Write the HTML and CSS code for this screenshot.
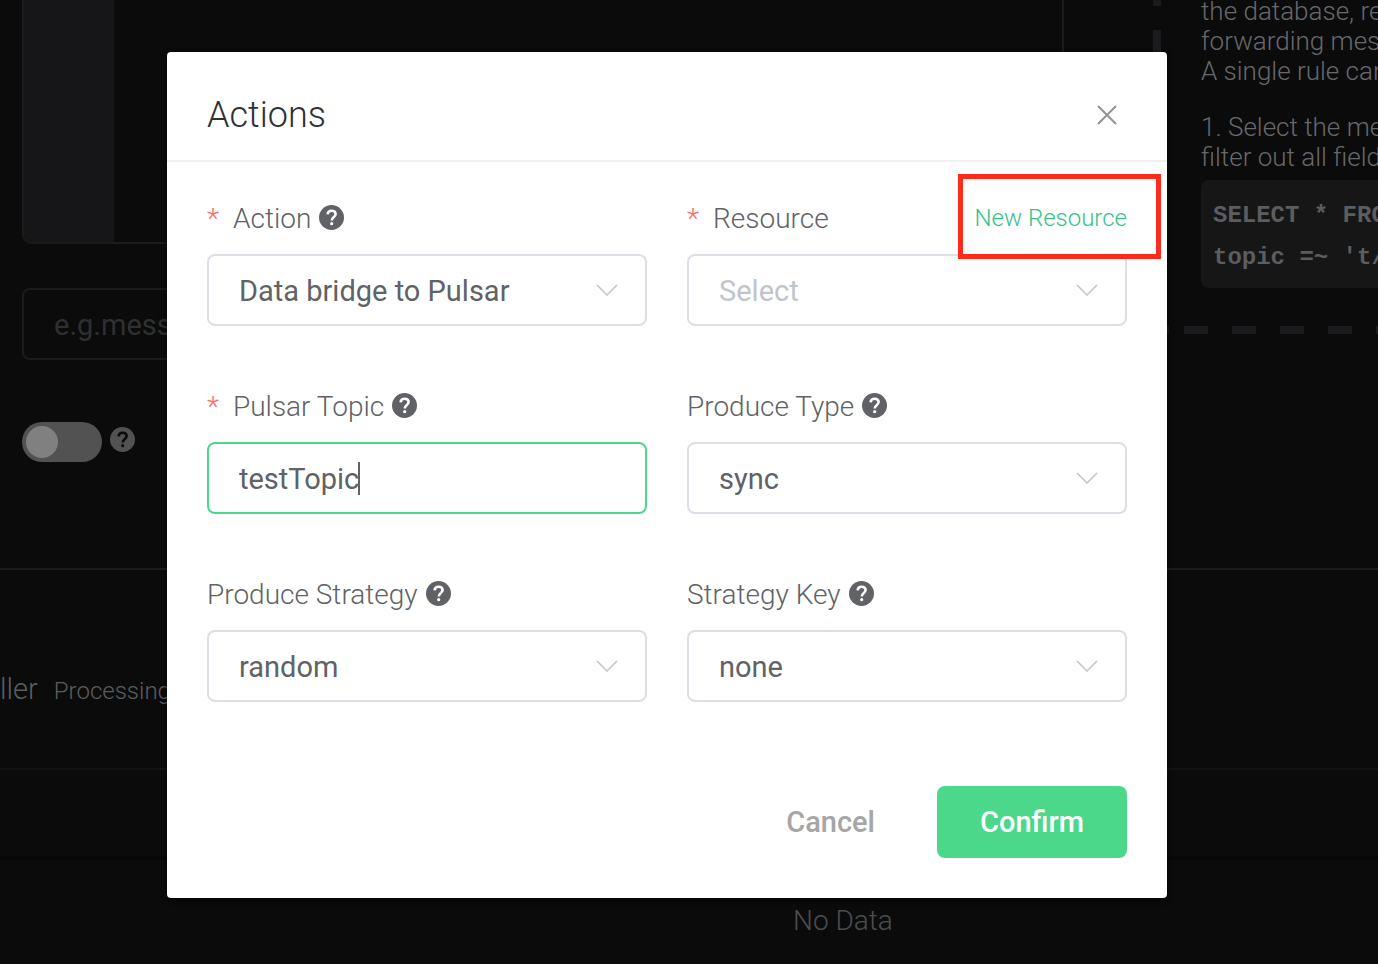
FILE: index.html
```html
<!DOCTYPE html>
<html lang="en">
<head>
  <meta charset="UTF-8" />
  <meta name="viewport" content="width=device-width, initial-scale=1.0" />
  <title>Rule Engine</title>
  <link rel="stylesheet" href="styles.css">
</head>
<body>
  <!-- shared icons -->
  <svg class="sprite" aria-hidden="true">
    <symbol id="icon-help" viewBox="0 0 25 25">
      <circle cx="12.5" cy="12.5" r="12.5" fill="currentColor"/>
      <path class="help-mark" d="M8.600 9.300c.2-2.400 1.700-3.600 4-3.600 2.400 0 4 1.400 4 3.400 0 1.500-.8 2.300-2 3.200-1.200.900-1.800 1.500-1.800 3.300"/>
      <circle class="help-dot" cx="12.700" cy="18.700" r="1.600"/>
    </symbol>
    <symbol id="icon-arrow" viewBox="0 0 22 12">
      <path d="M1 1l10 10 10-10" fill="none" stroke="currentColor" stroke-width="1.500"/>
    </symbol>
  </svg>

  <main class="page">
    <section class="rule">
      <div class="rule-form">
        <div class="editor"><div class="gutter"></div></div>
        <input class="note" type="text" placeholder="e.g.message" aria-label="Note" />
        <div class="switch-row">
          <input class="switch" type="checkbox" aria-label="Enable" />
          <svg class="help help-dark"><use href="#icon-help"/></svg>
        </div>
      </div>
      <aside class="guide">
        <p>the database, re<br>forwarding mes<br>A single rule can</p>
        <p>1. Select the me<br>filter out all field</p>
        <pre class="code">SELECT * FRO
topic =~ 't/</pre>
      </aside>
    </section>
    <section class="handler">
      <h2>ller</h2>
      <span>Processing</span>
    </section>
    <div class="table-head"></div>
    <div class="table-empty">No Data</div>
  </main>

  <div class="overlay">
    <div class="dialog" role="dialog" aria-labelledby="dialog-title">
      <header class="dialog-header">
        <h1 id="dialog-title">Actions</h1>
        <button class="close" type="button" aria-label="Close">
          <svg viewBox="0 0 20 20"><path d="M1 1l18 18M19 1L1 19" fill="none" stroke="currentColor" stroke-width="2"/></svg>
        </button>
      </header>

      <form>
        <div class="fields">
          <div class="field">
            <div class="field-label">
              <span class="required">*</span>
              <label for="action">Action</label>
              <svg class="help"><use href="#icon-help"/></svg>
            </div>
            <div class="control">
              <select id="action"><option>Data bridge to Pulsar</option></select>
              <svg class="arrow"><use href="#icon-arrow"/></svg>
            </div>
          </div>

          <div class="field">
            <div class="field-label">
              <span class="required">*</span>
              <label for="resource">Resource</label>
              <a class="new-resource" href="#">New Resource</a>
            </div>
            <div class="control">
              <select id="resource" class="empty"><option>Select</option></select>
              <svg class="arrow"><use href="#icon-arrow"/></svg>
            </div>
            <div class="highlight"></div>
          </div>

          <div class="field">
            <div class="field-label">
              <span class="required">*</span>
              <label for="topic">Pulsar Topic</label>
              <svg class="help"><use href="#icon-help"/></svg>
            </div>
            <div class="control">
              <input id="topic" class="active" type="text" value="testTopic" />
              <span class="caret"></span>
            </div>
          </div>

          <div class="field">
            <div class="field-label">
              <label for="type">Produce Type</label>
              <svg class="help"><use href="#icon-help"/></svg>
            </div>
            <div class="control">
              <select id="type"><option>sync</option></select>
              <svg class="arrow"><use href="#icon-arrow"/></svg>
            </div>
          </div>

          <div class="field">
            <div class="field-label">
              <label for="strategy">Produce Strategy</label>
              <svg class="help"><use href="#icon-help"/></svg>
            </div>
            <div class="control">
              <select id="strategy"><option>random</option></select>
              <svg class="arrow"><use href="#icon-arrow"/></svg>
            </div>
          </div>

          <div class="field">
            <div class="field-label">
              <label for="key">Strategy Key</label>
              <svg class="help"><use href="#icon-help"/></svg>
            </div>
            <div class="control">
              <select id="key"><option>none</option></select>
              <svg class="arrow"><use href="#icon-arrow"/></svg>
            </div>
          </div>
        </div>

        <footer class="dialog-footer">
          <button class="btn" type="button">Cancel</button>
          <button class="btn btn-primary" type="button">Confirm</button>
        </footer>
      </form>
    </div>
  </div>
</body>
</html>
```
FILE: styles.css
```css
* {
  box-sizing: border-box;
}
body {
  margin: 0;
  min-height: 100vh;
  position: relative;
  overflow: hidden;
  background: #0b0b0b;
  color: #606266;
  font-family: Roboto, "Liberation Sans", sans-serif;
  font-size: 28px;
  font-weight: 300;
}
h1, h2, p, pre {
  margin: 0;
  font-weight: 300;
}
input, select, button {
  font: inherit;
  color: inherit;
}
.sprite {
  position: absolute;
  width: 0;
  height: 0;
}

/* Page behind the dialog */
.rule {
  display: flex;
  height: 570px;
  border-bottom: 2px solid #1c1c1c;
}
.rule-form {
  flex: 1;
  padding: 0 89px 0 22px;
}
.editor {
  height: 244px;
  border: 2px solid #1b1b1c;
  border-top: 0;
  border-radius: 0 0 10px 10px;
  overflow: hidden;
}
.gutter {
  width: 90px;
  height: 100%;
  background: #161618;
}
.note {
  display: block;
  width: 100%;
  height: 72px;
  margin-top: 44px;
  padding: 2px 30px 0;
  background: transparent;
  border: 2px solid #1b1b1c;
  border-radius: 8px;
  font-size: 29px;
  font-weight: 400;
}
.note::placeholder {
  color: #2f3031;
}
.switch-row {
  display: flex;
  gap: 8px;
  margin-top: 62px;
}
.switch {
  appearance: none;
  width: 80px;
  height: 40px;
  margin: 0;
  padding: 4px;
  border-radius: 20px;
  background: #525252;
}
.switch::before {
  content: "";
  display: block;
  width: 32px;
  height: 32px;
  border-radius: 50%;
  background: #808080;
}
.guide {
  width: 225px;
  height: 334px;
  padding-left: 48px;
  overflow: hidden;
  white-space: nowrap;
  font-size: 26px;
  line-height: 30px;
  color: #67686b;
  /* dashed frame: left side, bottom side, corner */
  background:
    repeating-linear-gradient(#1b1b1d 0 6px, transparent 6px 30px, #1b1b1d 30px 48px) 0 0 / 8px 100% no-repeat,
    repeating-linear-gradient(90deg, transparent 0 31px, #1b1b1d 31px 55px, transparent 55px 79px, #1b1b1d 79px 103px, transparent 103px 127px, #1b1b1d 127px 151px, transparent 151px 175px, #1b1b1d 175px 199px, transparent 199px 223px, #1b1b1d 223px 225px) 0 100% / 100% 8px no-repeat,
    linear-gradient(#1b1b1d, #1b1b1d) 0 100% / 16px 8px no-repeat;
}
.guide p {
  margin-bottom: 26px;
}
.guide p:first-child {
  margin-top: -4px;
}
.guide .code {
  height: 108px;
  margin-top: -18px;
  padding: 15px 12px;
  border-radius: 8px 0 0 8px;
  background: #161616;
  font-family: "Liberation Mono", monospace;
  font-size: 24px;
  font-weight: 700;
  line-height: 42px;
  color: #5c5d60;
}
.handler {
  display: flex;
  align-items: baseline;
  gap: 16px;
  height: 200px;
  padding-top: 99px;
  border-bottom: 2px solid #131313;
  color: #5c5d5f;
}
.handler h2 {
  font-size: 29px;
  line-height: 40px;
}
.handler span {
  font-size: 24px;
}
.table-head {
  height: 90px;
  border-bottom: 4px solid #070707;
}
.table-empty {
  padding: 40px 0 24px 308px;
  line-height: 42px;
  text-align: center;
  color: #4c4d4f;
}

/* Dialog */
.overlay {
  position: absolute;
  inset: 0;
  display: flex;
  justify-content: center;
  align-items: flex-start;
  padding: 52px 44px 0 0;
}
.dialog {
  width: 100%;
  max-width: 1000px;
  background: #fff;
  border-radius: 4px;
  box-shadow: 0 2px 6px rgba(0, 0, 0, 0.6);
}
.dialog-header {
  display: flex;
  justify-content: space-between;
  align-items: center;
  height: 110px;
  padding: 18px 40px 0;
  border-bottom: 2px solid #f0f0f0;
  color: #303133;
}
.dialog-header h1 {
  font-size: 36px;
}
.close {
  padding: 0 10px;
  border: 0;
  background: none;
  color: #909399;
  cursor: pointer;
}
.close svg {
  display: block;
  width: 20px;
  height: 20px;
}
.fields {
  display: grid;
  grid-template-columns: 1fr 1fr;
  gap: 44px 40px;
  padding: 20px 40px 0;
}
.field {
  position: relative;
}
.field-label {
  display: flex;
  align-items: center;
  height: 72px;
}
.required {
  width: 26px;
  color: #ff6b6b;
}
.help {
  width: 25px;
  height: 25px;
  margin: 0 0 2px 8px;
}
.help-dark {
  margin: 5px 0 0;
  color: #525252;
  --mark: #0b0b0b;
}
.help-mark {
  fill: none;
  stroke: var(--mark, #fff);
  stroke-width: 2.6;
}
.help-dot {
  fill: var(--mark, #fff);
}
.new-resource {
  margin-left: auto;
  color: #34c388;
  font-size: 24px;
  text-decoration: none;
}
.highlight {
  position: absolute;
  top: -8px;
  right: -34px;
  width: 203px;
  height: 85px;
  border: 5px solid #fe2a1b;
  pointer-events: none;
}
.control {
  position: relative;
}
.control select,
.control input {
  display: block;
  width: 100%;
  height: 72px;
  padding: 2px 30px 0;
  appearance: none;
  background: #fff;
  border: 2px solid #dcdfe6;
  border-radius: 8px;
  font-size: 29px;
  font-weight: 400;
  outline: none;
}
.control .empty {
  color: #c0c4cc;
}
.control .active {
  border-color: #4bd88a;
}
.arrow {
  position: absolute;
  top: 30px;
  right: 29px;
  width: 22px;
  height: 12px;
  color: #c0c4cc;
  pointer-events: none;
}
.caret {
  position: absolute;
  top: 20px;
  left: 151px;
  width: 2px;
  height: 33px;
  background: #606266;
}
.dialog-footer {
  display: flex;
  justify-content: flex-end;
  gap: 20px;
  padding: 84px 40px 40px;
}
.btn {
  height: 72px;
  padding: 0 42px;
  border: 0;
  border-radius: 8px;
  background: none;
  color: #a6a6a6;
  font-size: 29px;
  font-weight: 500;
  cursor: pointer;
}
.btn-primary {
  min-width: 190px;
  background: #4bd88a;
  color: #fff;
}
```
